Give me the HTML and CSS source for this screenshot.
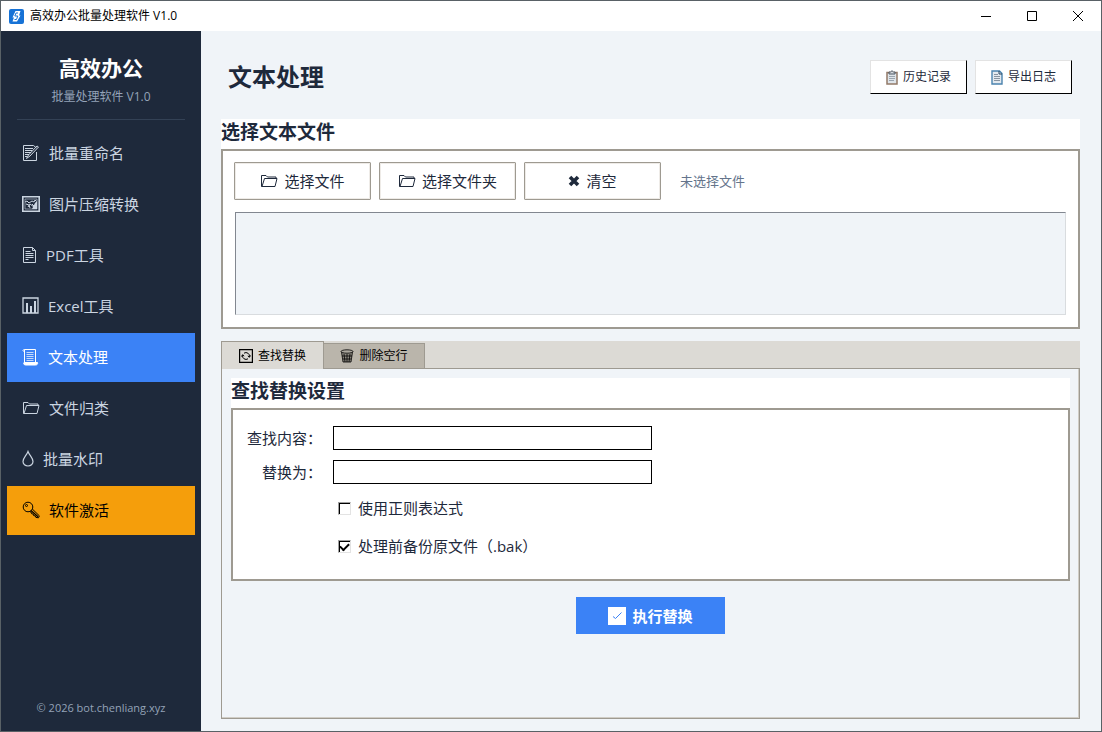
FILE: index.html
```
<!DOCTYPE html>
<html lang="zh-CN">
  <head>
    <title>高效办公批量处理软件 V1.0</title>
    <meta charset="utf-8">
    <link rel="stylesheet" href="styles.css">
  </head>
  <body>

  <div class="window">

    <header class="titlebar">
      <svg class="app-icon" width="15" height="15" viewBox="0 0 15 15">
        <rect width="15" height="15" rx="2" fill="#1672d6"/>
        <path d="M6.500 2h5L10 6.500h1.500L8 12.500H3.500L5 8.500H3.500z" fill="#fff"/>
        <path d="M9 4H7L5.800 7h3L7.500 10.500h-2" fill="none" stroke="#1672d6" stroke-width="1"/>
      </svg>
      <span class="titlebar-text">高效办公批量处理软件 V1.0</span>
      <div class="window-controls">
        <button type="button" aria-label="最小化"><svg width="12" height="12" viewBox="0 0 12 12"><path d="M1 6.500h10"/></svg></button>
        <button type="button" aria-label="最大化"><svg width="12" height="12" viewBox="0 0 12 12"><path d="M1.500 1.500h9v9h-9z"/></svg></button>
        <button type="button" aria-label="关闭"><svg width="12" height="12" viewBox="0 0 12 12"><path d="M1 1l10 10M11 1L1 11"/></svg></button>
      </div>
    </header>

    <div class="body">

      <aside class="sidebar">
        <div class="brand">
          <div class="brand-name">高效办公</div>
          <div class="brand-sub">批量处理软件 V1.0</div>
        </div>
        <nav class="nav">
          <button type="button">
            <svg width="18" height="18" viewBox="0 0 18 18"><path d="M14.500 8v8.500h-13v-15h10l3 2.500"/><path d="M3 4.500h8M3 6.500h7M3 8.500h6M3 10.500h4M3 12.500h2"/><path d="M16.500 3 8 12l-3.500 2.500L6.500 11 15 2z"/></svg>
            批量重命名
          </button>
          <button type="button">
            <svg width="18" height="16" viewBox="0 0 18 16"><path d="M.8.8h16.400v14.400H.8z" stroke-width="1.600"/><path d="M3 3h12v10H3z" opacity=".6"/><path d="M3 6l2-1 2 2 3-2 2 1 1-2 1 1M4 8l3 1 1 3M6 11l2-3 4 3M10 8l2 2"/><path d="M13 7l2-2v8h-5z" fill="currentColor" stroke="none"/></svg>
            图片压缩转换
          </button>
          <button type="button">
            <svg width="15" height="18" viewBox="0 0 15 18"><path d="M1.500 1.500h9l3 3v12h-12z"/><path d="M10.500 1.500v3h3"/><path d="M3.500 5.500h5M3.500 7.500h8M3.500 9.500h8M3.500 11.500h8M3.500 13.500h3"/></svg>
            PDF工具
          </button>
          <button type="button">
            <svg width="17" height="17" viewBox="0 0 17 17"><path d="M1 1h15v15H1z" stroke-width="1.300"/><path d="M5 16V6M9 16V9M13 16V4" stroke-width="2"/></svg>
            Excel工具
          </button>
          <button type="button" class="active">
            <svg width="17" height="18" viewBox="0 0 17 18"><path d="M2.500 14V1.500h11V14M2.500 1.500C.5 1.500.5 3.500 2.500 3.500"/><path d="M2 14.500h13.500c.5 1.500-.5 2.500-2 2.500H3.500C1.500 17 1.500 15 2 14.500z" fill="currentColor"/><path d="M4.500 4.500h7M4.500 6.500h7M4.500 8.500h7M4.500 10.500h7M4.500 12.500h7" opacity=".7"/></svg>
            文本处理
          </button>
          <button type="button">
            <svg width="18" height="14" viewBox="0 0 18 14"><use href="#folder"/></svg>
            文件归类
          </button>
          <button type="button">
            <svg width="12" height="17" viewBox="0 0 12 17"><path d="M6 1.500C4.500 5.500 1 8 1 11.500a5 4.500 0 0 0 10 0C11 8 7.500 5.500 6 1.500z" stroke-width="1.200"/></svg>
            批量水印
          </button>
          <button type="button" class="activate">
            <svg width="18" height="18" viewBox="0 0 18 18"><circle cx="6" cy="6" r="4.800"/><circle cx="4.500" cy="4.500" r="1"/><path d="M7.500 10.500l1.800.8.300 1.400 1.700.4.400 1.500 1.700.3.500 1.500 2.600.4.800-2L10.300 8"/><path d="M9 9.500l7 6.300" stroke-width="1.200"/></svg>
            软件激活
          </button>
        </nav>
        <footer class="copyright">© 2026 bot.chenliang.xyz</footer>
      </aside>

      <main class="main">

        <div class="page-head">
          <h1>文本处理</h1>
          <div class="page-actions">
            <button type="button" class="btn-raised">
              <svg width="12" height="15" viewBox="0 0 12 15"><path d="M1 2.500h10v11.500H1z" fill="#dfe5ea" stroke="#937a68" stroke-width="1.500"/><path d="M3 4V2h1.500L6 .7 7.500 2H9v2z" fill="#d5d9de" stroke="#4d5763"/><path d="M3 6.500h6M3 8.500h6M3 10.500h5" stroke="#9aa4af"/></svg>
              历史记录
            </button>
            <button type="button" class="btn-raised">
              <svg width="12" height="15" viewBox="0 0 12 15"><path d="M1 1h7.500L11 3.500V14H1z" fill="#e3e9ef" stroke="#4b83ae" stroke-width="1.400"/><path d="M8 1v3h3" fill="none" stroke="#28445f"/><path d="M3 4.500h4M3 6.500h6M3 8.500h6M3 10.500h6" stroke="#8793a0"/></svg>
              导出日志
            </button>
          </div>
        </div>

        <section class="group">
          <h2>选择文本文件</h2>
          <div class="group-box files-box">
            <div class="file-row">
              <button type="button" class="btn-file"><svg width="18" height="14" viewBox="0 0 18 14"><use href="#folder"/></svg>选择文件</button>
              <button type="button" class="btn-file"><svg width="18" height="14" viewBox="0 0 18 14"><use href="#folder"/></svg>选择文件夹</button>
              <button type="button" class="btn-file"><svg width="12" height="12" viewBox="0 0 12 12"><path d="M2 2l8 8M10 2l-8 8" stroke-width="3.600"/></svg>清空</button>
              <span class="file-status">未选择文件</span>
            </div>
            <div class="file-list"></div>
          </div>
        </section>

        <div class="notebook">
          <div class="tabs" role="tablist">
            <button type="button" role="tab" aria-selected="true" class="tab selected">
              <svg width="14" height="14" viewBox="0 0 14 14"><path d="M.6.6h12.800v12.800H.6z" stroke-width="1.200"/><path d="M5 4.200a3.500 3.500 0 0 1 5.400 3.600M9 9.800a3.500 3.500 0 0 1-5.400-3.600"/><path d="M2.500 7.500l1.100-1.800 1.600 1.300M11.500 6.500l-1.100 1.800L8.800 7"/></svg>
              查找替换
            </button>
            <button type="button" role="tab" aria-selected="false" class="tab">
              <svg width="14" height="14" viewBox="0 0 14 14" stroke-width=".8"><path d="M1.500 3l1.500 10h8l1.500-10z" fill="#8d8980"/><ellipse cx="7" cy="2.500" rx="6" ry="1.700" fill="#aaa69d"/><path d="M4 5l1 8M7 5v8M10 5l-1 8M2 7h10M3 10h8"/></svg>
              删除空行
            </button>
          </div>
          <div class="pane" role="tabpanel">
            <section class="group">
              <h2>查找替换设置</h2>
              <form class="group-box settings">
                <label for="find">查找内容：</label>
                <input type="text" id="find">
                <label for="replace">替换为：</label>
                <input type="text" id="replace">
                <label class="check"><input type="checkbox">使用正则表达式</label>
                <label class="check"><input type="checkbox" checked>处理前备份原文件（.bak）</label>
              </form>
            </section>
            <button type="button" class="btn-run">
              <svg width="18" height="18" viewBox="0 0 18 18"><path d="M0 0h18v18H0z" fill="#fff"/><path d="M5 9.500l2.500 2L13.500 5.500" fill="none" stroke="#3b82f6" stroke-width="1"/></svg>
              执行替换
            </button>
          </div>
        </div>

      </main>
    </div>
  </div>

  <svg class="sprite" width="0" height="0">
    <symbol id="folder" viewBox="0 0 18 14">
      <path d="M2 12.500h-.500v-11h4.500l1.500 1.500h8.500v1"/>
      <path d="M2 12.500L4.500 4.500H17l-2 8z"/>
    </symbol>
  </svg>

  </body>
</html>
```
FILE: styles.css
```
* {
  box-sizing: border-box;
}
html, body {
  height: 100%;
}
body {
  margin: 0;
  color: #1e293b;
  font-family: "Open Sans", "Noto Sans CJK SC", sans-serif;
  font-size: 15px;
  line-height: 20px;
}
h1, h2 {
  margin: 0;
}
button, input {
  font: inherit;
  color: inherit;
}
button {
  display: flex;
  align-items: center;
  justify-content: center;
  margin: 0;
  padding: 0;
  border: 0;
  background: none;
  white-space: nowrap;
}
svg {
  flex: none;
  fill: none;
  stroke: currentColor;
}
.sprite {
  position: absolute;
}

.window {
  display: flex;
  flex-direction: column;
  min-height: 100%;
  border: 1px solid #596166;
  background: #f0f4f8;
}

/* title bar */
.titlebar {
  display: flex;
  align-items: center;
  height: 30px;
  padding-left: 8px;
  background: #fff;
  color: #000;
  font-size: 12px;
}
.app-icon {
  stroke: none;
}
.titlebar-text {
  margin-left: 6px;
}
.window-controls {
  display: flex;
  margin-left: auto;
}
.window-controls button {
  width: 46px;
  height: 28px;
}

.body {
  display: flex;
  flex: 1;
}

/* sidebar */
.sidebar {
  display: flex;
  flex-direction: column;
  flex: none;
  width: 200px;
  background: #1e293b;
  color: #cbd5e1;
}
.brand {
  margin: 0 16px;
  padding: 23px 0 14px;
  border-bottom: 1px solid #334155;
  text-align: center;
}
.brand-name {
  color: #fff;
  font-size: 21px;
  font-weight: bold;
  line-height: 28px;
}
.brand-sub {
  margin-top: 7px;
  color: #94a3b8;
  font-size: 12px;
  line-height: 16px;
}
.nav {
  display: flex;
  flex-direction: column;
  gap: 2px;
  padding: 9px 6px;
}
.nav button {
  justify-content: flex-start;
  gap: 9px;
  height: 49px;
  padding: 0 0 2px 15px;
}
.nav .active {
  background: #3b82f6;
  color: #fff;
}
.nav .activate {
  background: #f59e0b;
  color: #000;
}
.copyright {
  margin-top: auto;
  padding-bottom: 13px;
  color: #94a3b8;
  font-size: 11px;
  text-align: center;
}

/* content */
.main {
  display: flex;
  flex-direction: column;
  flex: 1;
  min-width: 0;
  padding: 29px 21px 12px 20px;
}
.page-head {
  display: flex;
  align-items: center;
  justify-content: space-between;
  margin-bottom: 25px;
  padding: 0 8px 0 7px;
}
.page-head h1 {
  font-size: 24px;
  line-height: 34px;
}
.page-actions {
  display: flex;
  gap: 8px;
}
.btn-raised {
  gap: 5px;
  width: 97px;
  height: 34px;
  border: 1px solid #000;
  border-top-color: #e3e3e3;
  border-left-color: #e3e3e3;
  background: #fff;
  font-size: 12px;
}

.group h2 {
  padding-bottom: 4px;
  background: #fff;
  font-size: 19px;
  line-height: 26px;
}
.group-box {
  border: 2px solid #9e9a91;
  background: #fff;
}
.files-box {
  padding: 11px;
}
.file-row {
  display: flex;
  align-items: center;
  gap: 8px;
}
.btn-file {
  gap: 6px;
  width: 137px;
  height: 38px;
  border: 1px solid #9e9a91;
  border-radius: 1px;
  box-shadow: inset 0 0 0 1px #eeebe7;
}
.file-status {
  margin-left: 11px;
  color: #64748b;
  font-size: 13px;
}
.file-list {
  height: 103px;
  margin: 12px 1px 1px;
  border: 1px solid #828790;
  border-right-color: #d9dcdf;
  border-bottom-color: #d9dcdf;
  background: #f0f4f8;
}

/* notebook */
.notebook {
  display: flex;
  flex-direction: column;
  flex: 1;
  margin-top: 12px;
}
.tabs {
  display: flex;
  align-items: flex-end;
  height: 27px;
  background: #dcdad5;
}
.tab {
  gap: 5px;
  width: 101px;
  height: 25px;
  border: 1px solid #9e9a91;
  border-left: 0;
  border-bottom: 0;
  background: #bab5ab;
  color: #000;
  font-size: 12px;
}
.tab.selected {
  position: relative;
  width: 103px;
  height: 28px;
  margin-bottom: -1px;
  border-left: 1px solid #9e9a91;
  background: #dcdad5;
}
.pane {
  flex: 1;
  padding: 9px;
  border: 1px solid #9e9a91;
  box-shadow: inset -1px -1px 0 #d0cdc6;
}
.settings {
  display: grid;
  grid-template-columns: 75px minmax(0, 319px);
  gap: 10px 11px;
  padding: 16px 14px 19px;
}
.settings label {
  line-height: 24px;
  text-align: right;
  white-space: nowrap;
}
.settings input[type="text"] {
  width: 100%;
  height: 24px;
  padding: 0 4px;
  border: 1px solid #000;
  background: #fff;
}
.settings .check {
  display: flex;
  align-items: center;
  grid-column: 2;
  gap: 7px;
  height: 28px;
  padding-left: 5px;
}
.check input {
  appearance: none;
  display: grid;
  place-items: center;
  width: 13px;
  height: 13px;
  margin: 0;
  border: 1px solid #e3e3e3;
  border-top-color: #a0a0a0;
  border-left-color: #a0a0a0;
  background: #fff;
  box-shadow: inset 1px 1px 0 #000;
}
.check input:checked::before {
  content: "";
  width: 7px;
  height: 4px;
  margin-bottom: 1px;
  border: solid #000;
  border-width: 0 0 2px 2px;
  transform: rotate(-45deg);
}
.btn-run {
  gap: 6px;
  width: 149px;
  height: 37px;
  margin: 16px auto 0;
  background: #3b82f6;
  color: #fff;
  font-weight: bold;
}
.btn-run svg {
  stroke: none;
}
```
